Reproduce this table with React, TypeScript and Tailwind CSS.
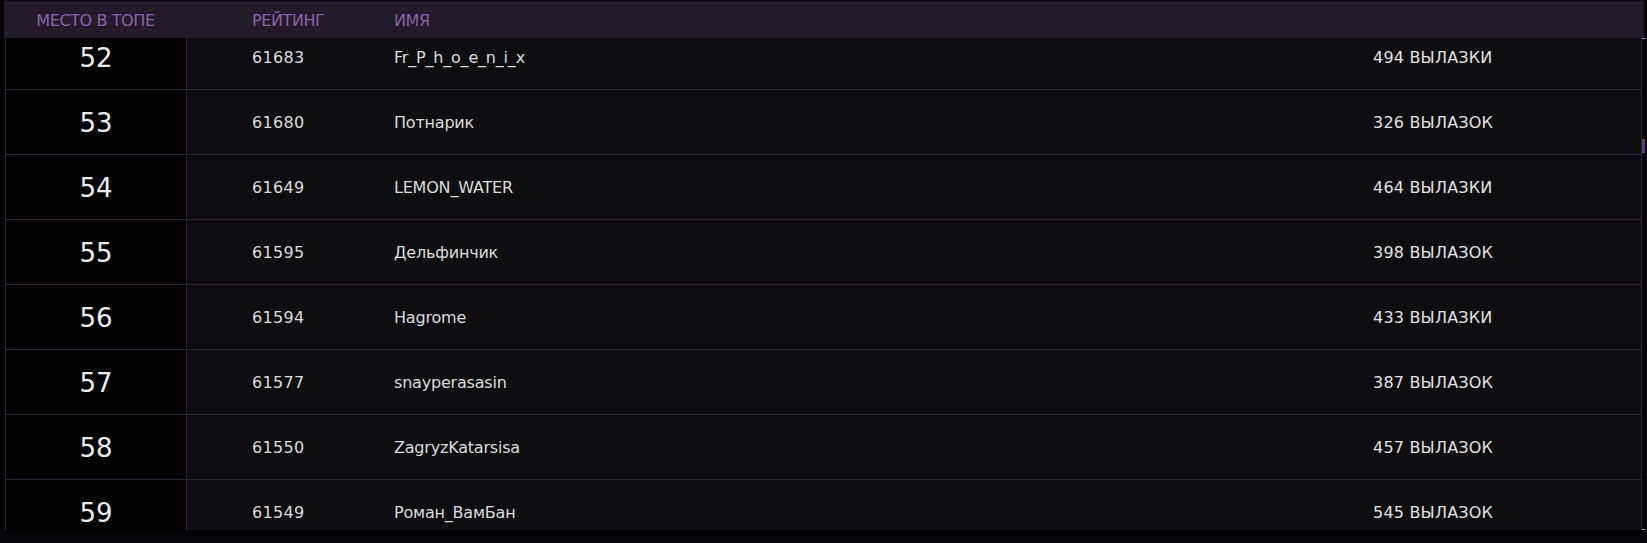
import React from "react";

const rows = [
  { place: 52, rating: 61683, name: "Fr_P_h_o_e_n_i_x", sorties: "494 ВЫЛАЗКИ" },
  { place: 53, rating: 61680, name: "Потнарик", sorties: "326 ВЫЛАЗОК" },
  { place: 54, rating: 61649, name: "LEMON_WATER", sorties: "464 ВЫЛАЗКИ" },
  { place: 55, rating: 61595, name: "Дельфинчик", sorties: "398 ВЫЛАЗОК" },
  { place: 56, rating: 61594, name: "Hagrome", sorties: "433 ВЫЛАЗКИ" },
  { place: 57, rating: 61577, name: "snayperasasin", sorties: "387 ВЫЛАЗОК" },
  { place: 58, rating: 61550, name: "ZagryzKatarsisa", sorties: "457 ВЫЛАЗОК" },
  { place: 59, rating: 61549, name: "Роман_ВамБан", sorties: "545 ВЫЛАЗОК" },
];

export default function App() {
  return (
    <div
      className="relative w-[1647px] h-[543px] overflow-hidden bg-[#050407]"
      style={{ fontFamily: '"DejaVu Sans", "Noto Sans", sans-serif' }}
    >
      {/* top strip */}
      <div className="h-[3px] ml-[4px] w-[1640px] bg-[#141118] border-b border-[#2a2331]" />
      {/* header */}
      <div className="ml-[4px] w-[1640px] h-[35px] bg-[#221b2a] flex items-center text-[16px] text-[#8a62a8] tracking-[-0.4px]">
        <div className="w-[183px] text-center">МЕСТО В ТОПЕ</div>
        <div className="w-[207px] pl-[65px]">РЕЙТИНГ</div>
        <div>ИМЯ</div>
      </div>
      {/* body */}
      <div className="ml-[5px] w-[1637px] h-[492px] overflow-hidden border-x border-[#2e2638]">
        <div className="-mt-[13px]">
          {rows.map((r) => (
            <div key={r.place} className="flex h-[65px] border-b border-[#2e2638]">
              <div className="w-[181px] shrink-0 bg-[#030303] border-r border-[#2e2638] flex items-center justify-center pt-[2px] text-[26px] text-[#ececec]">
                {r.place}
              </div>
              <div className="flex-1 flex items-center pt-[2px] bg-[#0e0d10] text-[16px] text-[#dcdcdc]">
                <div className="w-[207px] shrink-0 pl-[65px] tracking-[0.3px]">{r.rating}</div>
                <div className="w-[979px] shrink-0 tracking-[-0.2px]">{r.name}</div>
                <div className="text-[#e2e2e2] tracking-[0.2px]">{r.sorties}</div>
              </div>
            </div>
          ))}
        </div>
      </div>
      {/* scrollbar marks */}
      <div className="absolute left-[1642px] top-[38px] w-[3px] h-[1px] bg-[#b98ee0]" />
      <div className="absolute left-[1642px] top-[139px] w-[3px] h-[14px] bg-[#5e3a7a]" />
      <div className="absolute left-[1642px] top-[529px] w-[3px] h-[1px] bg-[#b98ee0]" />
    </div>
  );
}
